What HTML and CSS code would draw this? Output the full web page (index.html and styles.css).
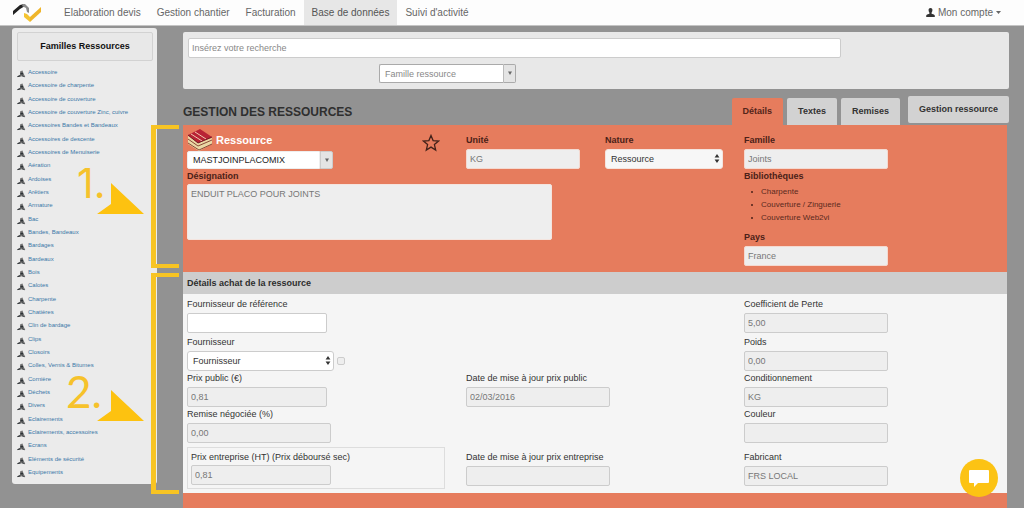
FILE: index.html
```html
<!DOCTYPE html>
<html lang="fr">
<head>
<meta charset="utf-8">
<title>Gestion des ressources</title>
<link rel="stylesheet" href="styles.css">
</head>
<body>
<svg class="defs" aria-hidden="true">
  <symbol id="family" viewBox="0 0 9 8"><path d="M3.2 1.2 5.6.6l.7 2.6 1.9 3.2-2-.5-1.4.7-1.5-.7L0 7.2l.4-1 2.6-1.5z" fill="#777"/><path d="M3.4 2.8h2.8v1.6H3.4zM.3 6.2l2.8-1 .8 1.2-3 .5zM5.2 5.2l3 1.5-.4.6-2.8-1z" fill="#2d3236"/></symbol>
  <symbol id="updown" viewBox="0 0 6 9"><path d="M3 0 5.4 3.6H.6zM3 9 .6 5.4h4.8z" fill="#333"/></symbol>
  <symbol id="down" viewBox="0 0 6 5"><path d="M1 .5h4L3 4z" fill="#666"/></symbol>
</svg>

<header class="topbar">
  <a class="logo" href="#" aria-label="Accueil">
    <svg width="30" height="20" viewBox="0 0 30 20"><path d="M1 8 8 2l4-1 1 2-5 3-7 6z" fill="#222"/><path d="m11 1 2 0 4 4v5l-2-1-1-4-4-2z" fill="#8b8b8b"/><path d="m12 10 3 1 3 3v5l-6-5z" fill="#f5c431"/><path d="M18 14 29 4v5L18 19z" fill="#efb52a"/></svg>
  </a>
  <nav class="nav">
    <a href="#">Elaboration devis</a>
    <a href="#">Gestion chantier</a>
    <a href="#">Facturation</a>
    <a class="current" href="#">Base de données</a>
    <a href="#">Suivi d'activité</a>
  </nav>
  <button class="account" type="button">
    <svg width="9" height="9" viewBox="0 0 9 9"><path d="M4.500 0C6 0 6.600 1.100 6.400 2.500 6.300 3.700 5.700 4.300 5.500 4.800v.7c.6.6 2.900.8 3.300 2.100V9H.2V7.600C.6 6.300 2.900 6.100 3.500 5.500v-.7c-.2-.5-.8-1.100-.9-2.300C2.400 1.100 3 0 4.500 0z" fill="#333"/></svg>
    Mon compte
    <svg width="5" height="3" viewBox="0 0 5 3"><path d="M0 0h5L2.500 3z" fill="#666"/></svg>
  </button>
</header>

<div class="layout">
  <aside class="sidebar">
    <h2 class="sidebar-title">Familles Ressources</h2>
    <ul class="families">
      <li><svg class="fam"><use href="#family"/></svg><a href="#">Accessoire</a></li>
      <li><svg class="fam"><use href="#family"/></svg><a href="#">Accessoire de charpente</a></li>
      <li><svg class="fam"><use href="#family"/></svg><a href="#">Accessoire de couverture</a></li>
      <li><svg class="fam"><use href="#family"/></svg><a href="#">Accessoire de couverture Zinc, cuivre</a></li>
      <li><svg class="fam"><use href="#family"/></svg><a href="#">Accessoires Bandes et Bandeaux</a></li>
      <li><svg class="fam"><use href="#family"/></svg><a href="#">Accessoires de descente</a></li>
      <li><svg class="fam"><use href="#family"/></svg><a href="#">Accessoires de Menuiserie</a></li>
      <li><svg class="fam"><use href="#family"/></svg><a href="#">Aération</a></li>
      <li><svg class="fam"><use href="#family"/></svg><a href="#">Ardoises</a></li>
      <li><svg class="fam"><use href="#family"/></svg><a href="#">Arêtiers</a></li>
      <li><svg class="fam"><use href="#family"/></svg><a href="#">Armature</a></li>
      <li><svg class="fam"><use href="#family"/></svg><a href="#">Bac</a></li>
      <li><svg class="fam"><use href="#family"/></svg><a href="#">Bandes, Bandeaux</a></li>
      <li><svg class="fam"><use href="#family"/></svg><a href="#">Bardages</a></li>
      <li><svg class="fam"><use href="#family"/></svg><a href="#">Bardeaux</a></li>
      <li><svg class="fam"><use href="#family"/></svg><a href="#">Bois</a></li>
      <li><svg class="fam"><use href="#family"/></svg><a href="#">Calotes</a></li>
      <li><svg class="fam"><use href="#family"/></svg><a href="#">Charpente</a></li>
      <li><svg class="fam"><use href="#family"/></svg><a href="#">Chatières</a></li>
      <li><svg class="fam"><use href="#family"/></svg><a href="#">Clin de bardage</a></li>
      <li><svg class="fam"><use href="#family"/></svg><a href="#">Clips</a></li>
      <li><svg class="fam"><use href="#family"/></svg><a href="#">Closoirs</a></li>
      <li><svg class="fam"><use href="#family"/></svg><a href="#">Colles, Vernis &amp; Bitumes</a></li>
      <li><svg class="fam"><use href="#family"/></svg><a href="#">Cornière</a></li>
      <li><svg class="fam"><use href="#family"/></svg><a href="#">Déchets</a></li>
      <li><svg class="fam"><use href="#family"/></svg><a href="#">Divers</a></li>
      <li><svg class="fam"><use href="#family"/></svg><a href="#">Eclairements</a></li>
      <li><svg class="fam"><use href="#family"/></svg><a href="#">Eclairements, accessoires</a></li>
      <li><svg class="fam"><use href="#family"/></svg><a href="#">Ecrans</a></li>
      <li><svg class="fam"><use href="#family"/></svg><a href="#">Eléments de sécurité</a></li>
      <li><svg class="fam"><use href="#family"/></svg><a href="#">Equipements</a></li>
    </ul>
  </aside>

  <main class="main">
    <form class="search">
      <input class="search-text" type="text" aria-label="Recherche" placeholder="Insérez votre recherche">
      <div class="combo combo-family">
        <input type="text" aria-label="Famille ressource" placeholder="Famille ressource">
        <button type="button" aria-label="Ouvrir la liste"><svg width="6" height="5"><use href="#down"/></svg></button>
      </div>
    </form>

    <div class="heading">
      <h1>GESTION DES RESSOURCES</h1>
      <div class="tabs">
        <button class="tab active" type="button">Détails</button>
        <button class="tab" type="button">Textes</button>
        <button class="tab" type="button">Remises</button>
      </div>
      <button class="manage" type="button">Gestion ressource</button>
    </div>

    <div class="sheet">
      <section class="identity">
        <div>
          <div class="identity-row">
            <div class="resource">
              <div>
                <label class="resource-label" for="resource">
                  <svg width="26" height="22" viewBox="0 0 26 22">
                    <path d="m1 7 10 7 14-5v6l-13 7L1 15z" fill="#ead7a5"/>
                    <path d="m1 10 10 7 14-6M1 14l11 7 13-6" fill="none" stroke="#8a4a38"/>
                    <path d="M1 6 13 0l12 8-14 6z" fill="#b92335"/>
                    <path d="m4 5 11 7M8 3l11 7" stroke="#efc9ae" stroke-width="1"/>
                    <path d="m1 6 10 8 14-6" fill="none" stroke="#731d27"/>
                  </svg>
                  Ressource
                </label>
                <div class="combo combo-resource">
                  <input id="resource" type="text" value="MASTJOINPLACOMIX">
                  <button type="button" aria-label="Ouvrir la liste"><svg width="6" height="5"><use href="#down"/></svg></button>
                </div>
              </div>
              <button class="star" type="button" aria-label="Favori"><svg width="18" height="18" viewBox="0 0 18 18"><path d="m9 1.500 2.100 5.100 5.500.4-4.200 3.600 1.300 5.400L9 13.100 4.300 16l1.300-5.400L1.400 7l5.500-.4z" fill="none" stroke="#43221a" stroke-width="1.300"/></svg></button>
            </div>
            <div class="field"><label for="unit">Unité</label><input id="unit" class="w-unit" type="text" value="KG" readonly></div>
            <div class="field"><label for="kind">Nature</label>
              <div class="select w-kind"><select id="kind"><option>Ressource</option></select><svg width="6" height="9"><use href="#updown"/></svg></div>
            </div>
          </div>
          <div class="designation">
            <label for="designation">Désignation</label>
            <textarea id="designation" readonly>ENDUIT PLACO POUR JOINTS</textarea>
          </div>
        </div>
        <div>
          <div class="field"><label for="family-name">Famille</label><input id="family-name" class="w-field" type="text" value="Joints" readonly></div>
          <h3>Bibliothèques</h3>
          <ul class="libraries"><li>Charpente</li><li>Couverture / Zinguerie</li><li>Couverture Web2vi</li></ul>
          <div class="field"><label for="country">Pays</label><input id="country" class="w-field" type="text" value="France" readonly></div>
        </div>
      </section>

      <h2 class="section-title">Détails achat de la ressource</h2>
      <section class="purchase">
        <div class="field c1 r1"><label for="ref">Fournisseur de référence</label><input id="ref" class="w-short" type="text"></div>
        <div class="field c1 r2"><label for="supplier">Fournisseur</label>
          <div class="supplier">
            <div class="select w-supplier"><select id="supplier"><option>Fournisseur</option></select><svg width="6" height="9"><use href="#updown"/></svg></div>
            <input class="check" type="checkbox" aria-label="Fournisseur par défaut">
          </div>
        </div>
        <div class="field c1 r3"><label for="public">Prix public (€)</label><input id="public" class="w-short" type="text" value="0,81" readonly></div>
        <div class="field c1 r4"><label for="discount">Remise négociée (%)</label><input id="discount" class="w-field" type="text" value="0,00" readonly></div>
        <div class="field c1 r5 boxed"><label for="company">Prix entreprise (HT) (Prix déboursé sec)</label><input id="company" class="w-short" type="text" value="0,81" readonly></div>

        <div class="field c2 r3"><label for="date-public">Date de mise à jour prix public</label><input id="date-public" class="w-field" type="text" value="02/03/2016" readonly></div>
        <div class="field c2 r5 last"><label for="date-company">Date de mise à jour prix entreprise</label><input id="date-company" class="w-field" type="text" readonly></div>

        <div class="field c3 r1"><label for="loss">Coefficient de Perte</label><input id="loss" class="w-field" type="text" value="5,00" readonly></div>
        <div class="field c3 r2"><label for="weight">Poids</label><input id="weight" class="w-field" type="text" value="0,00" readonly></div>
        <div class="field c3 r3"><label for="pack">Conditionnement</label><input id="pack" class="w-field" type="text" value="KG" readonly></div>
        <div class="field c3 r4"><label for="color">Couleur</label><input id="color" class="w-field" type="text" readonly></div>
        <div class="field c3 r5 last"><label for="maker">Fabricant</label><input id="maker" class="w-field" type="text" value="FRS LOCAL" readonly></div>
      </section>
    </div>
  </main>
</div>

<div class="bracket bracket-one"></div>
<div class="bracket bracket-two"></div>
<div class="step step-one">1.</div>
<div class="step step-two">2.</div>
<svg class="pointer pointer-one" viewBox="0 0 47 32"><path d="M14 0 47 31H0l14-10z" fill="#fdc210"/></svg>
<svg class="pointer pointer-two" viewBox="0 0 47 32"><path d="M14 0 47 31H0l14-10z" fill="#fdc210"/></svg>

<button class="chat" type="button" aria-label="Discussion"><svg width="20" height="17" viewBox="0 0 20 17"><path d="M1 0h18q1 0 1 1v11q0 1-1 1H9l-4 4v-4H1q-1 0-1-1V1q0-1 1-1z" fill="#fff"/></svg></button>
</body>
</html>
```
FILE: styles.css
```css
* { box-sizing: border-box; }

body {
  margin: 0;
  min-height: 100vh;
  display: flex;
  flex-direction: column;
  position: relative;
  overflow: hidden;
  background: #929292;
  color: #333;
  font: 9px/13px "Liberation Sans", Arial, sans-serif;
}

h1, h2, h3, ul { margin: 0; padding: 0; }
button, input, select, textarea { font: inherit; color: inherit; margin: 0; }
button { border: 0; padding: 0; cursor: pointer; }
a { color: inherit; text-decoration: none; }
svg { display: block; flex: none; }
.defs { position: absolute; width: 0; height: 0; }

/* Top bar */
.topbar {
  display: flex;
  align-items: stretch;
  height: 26px;
  padding: 0 23px 0 12px;
  background: #fdfdfd;
  border-bottom: 1px solid #c4c4c4;
  color: #666;
}
.logo { width: 44px; padding-top: 3px; }
.nav { display: flex; font-size: 10px; }
.nav a { padding: 0 8px; line-height: 25px; }
.nav .current { background: #e7e7e7; color: #555; }
.account {
  display: flex;
  align-items: center;
  gap: 3px;
  margin-left: auto;
  background: none;
  color: #666;
  font-size: 10px;
}

/* Page columns */
.layout { display: flex; flex: 1; gap: 26px; padding: 0 15px 0 12px; }
.sidebar {
  flex: none;
  align-self: flex-start;
  width: 145px;
  margin-top: 2px;
  padding: 4px 4px 5px 5px;
  background: #ebebeb;
  border-radius: 3px;
}
.sidebar-title {
  border: 1px solid #d2d2d2;
  border-radius: 2px;
  background: #e8e8e8;
  color: #111;
  font-size: 9px;
  line-height: 27px;
  text-align: center;
}
.families {
  display: grid;
  grid-auto-rows: 1fr;
  height: 413px;
  margin-top: 5px;
  list-style: none;
  color: #3a78a8;
  font-size: 6px;
}
.families li { display: flex; align-items: center; gap: 2px; }
.fam { width: 9px; height: 8px; margin-top: 3px; }

.main { flex: 1; min-width: 0; display: flex; flex-direction: column; padding-top: 6px; }

/* Search */
.search {
  padding: 6px 5px;
  background: #e8e8e8;
  border-radius: 2px;
}
input, textarea, select {
  border: 1px solid #ccc;
  border-radius: 2px;
  background: #fff;
  outline: 0;
}
input[type="text"] { display: block; height: 20px; padding: 0 3px; }
input::placeholder { color: #888; opacity: 1; }
.search-text { width: 80%; }
.combo { display: flex; }
.combo input { flex: 1; min-width: 0; border-radius: 2px 0 0 2px; }
.combo button {
  display: grid;
  place-items: center;
  width: 13px;
  border: 1px solid #aaa;
  border-left-color: #bbb;
  border-radius: 0 2px 2px 0;
  background: #e4e4e4;
}
.combo-family { width: 137px; margin: 6px 0 0 191px; }
.combo-family input { height: 19px; padding: 0 5px; border-color: #aaa; border-right: 0; }

/* Heading and tabs */
.heading { display: flex; align-items: flex-start; padding-top: 7px; height: 36px; }
h1 { margin-right: auto; color: #2f2f2f; font-size: 12px; line-height: 32px; }
.tabs { display: flex; gap: 4px; padding-top: 2px; }
.tab, .manage {
  height: 27px;
  padding: 0 11px;
  background: #d2d2d2;
  border-radius: 2px 2px 0 0;
  color: #333;
  font-weight: bold;
}
.tab.active { background: #e67c5d; color: #54251a; }
.manage { margin-left: 8px; border-radius: 2px; }

/* Resource sheet */
.sheet { flex: 1; margin-right: 2px; background: #e67c5d; }
.identity {
  display: grid;
  grid-template-columns: 557fr 263fr;
  min-height: 147px;
  padding: 9px 0 5px 4px;
}
.identity-row { display: grid; grid-template-columns: 279fr 139fr 139fr; }
label { display: block; }
.identity label, h3 { color: #4b2118; font-size: 9px; font-weight: bold; line-height: 13px; }
.field label { margin-bottom: 2px; }
.identity .field input { border-color: #f4d9d0; height: 20px; }
input[readonly], textarea { background: #eee; color: #777; }
.w-unit { width: 114px; }
.w-kind { width: 118px; }
.w-field { width: 144px; }
.w-short { width: 140px; }
.w-supplier { width: 147px; }

.resource { display: flex; justify-content: space-between; padding-right: 26px; }
.identity .resource-label {
  display: flex;
  align-items: center;
  gap: 3px;
  height: 17px;
  padding-bottom: 5px;
  color: #fff;
  font-size: 11px;
}
.combo-resource { width: 146px; }
.combo-resource input { height: 18px; padding: 0 5px; border-color: #eee; color: #222; }
.combo-resource button { border-color: #ccc; }
.star { align-self: flex-start; height: 18px; background: none; }

.select { position: relative; }
.select select {
  appearance: none;
  display: block;
  width: 100%;
  height: 20px;
  padding: 0 5px;
  border-radius: 3px;
  color: #333;
}
.select svg { position: absolute; right: 3px; top: 5px; pointer-events: none; }
.w-kind select { background: #f7f7f7; border-color: #f4e4de; }

.designation { padding-top: 1px; }
.designation textarea {
  display: block;
  width: 365px;
  height: 56px;
  margin-top: 1px;
  padding: 3px;
  border-color: #f4e4de;
  resize: none;
}
h3 { margin-top: 1px; }
.libraries { margin: 2px 0 7px 17px; color: #5a2a1e; font-size: 8px; list-style: none; }
.libraries li { display: flex; align-items: center; }
.libraries li::before {
  content: "";
  width: 2px;
  height: 2px;
  margin: 0 8px 0 -10px;
  border-radius: 1px;
  background: #4b2118;
}

.section-title {
  padding-left: 4px;
  background: #cdcdcd;
  color: #2d2d2d;
  font-size: 9px;
  line-height: 22px;
}
.purchase {
  display: grid;
  grid-template-columns: 279fr 278fr 263fr;
  grid-template-rows: 38px 36px 36px 39px auto;
  padding: 4px 0 4px 4px;
  background: #f5f5f5;
}
.c1 { grid-column: 1; }
.c2 { grid-column: 2; }
.c3 { grid-column: 3; }
.r1 { grid-row: 1; }
.r2 { grid-row: 2; }
.r3 { grid-row: 3; }
.r4 { grid-row: 4; }
.r5 { grid-row: 5; }
.last { padding-top: 4px; }
.boxed {
  width: 258px;
  padding: 3px;
  border: 1px solid #ddd;
}
.boxed label { margin-bottom: 1px; }
.supplier { display: flex; align-items: center; gap: 3px; }
.check {
  appearance: none;
  width: 8px;
  height: 8px;
  background: #eee;
}

/* Guide marks laid over the page */
.bracket {
  position: absolute;
  left: 151px;
  width: 28px;
  border: 4px solid #f8c423;
  border-left-width: 5px;
  border-right: 0;
}
.bracket-one { top: 125px; height: 143px; }
.bracket-two { top: 273px; height: 221px; }
.step { position: absolute; color: #f6c22b; }
.step-one { top: 161px; left: 77px; font: 41px/44px Inter, sans-serif; }
.step-two { top: 369px; left: 66px; font: 44px/44px Lato, sans-serif; }
.pointer { position: absolute; left: 97px; width: 47px; height: 32px; }
.pointer-one { top: 183px; }
.pointer-two { top: 390px; }

.chat {
  position: fixed;
  right: 26px;
  bottom: 11px;
  display: grid;
  place-items: center;
  width: 38px;
  height: 38px;
  border-radius: 50%;
  background: #fcc314;
}
```
